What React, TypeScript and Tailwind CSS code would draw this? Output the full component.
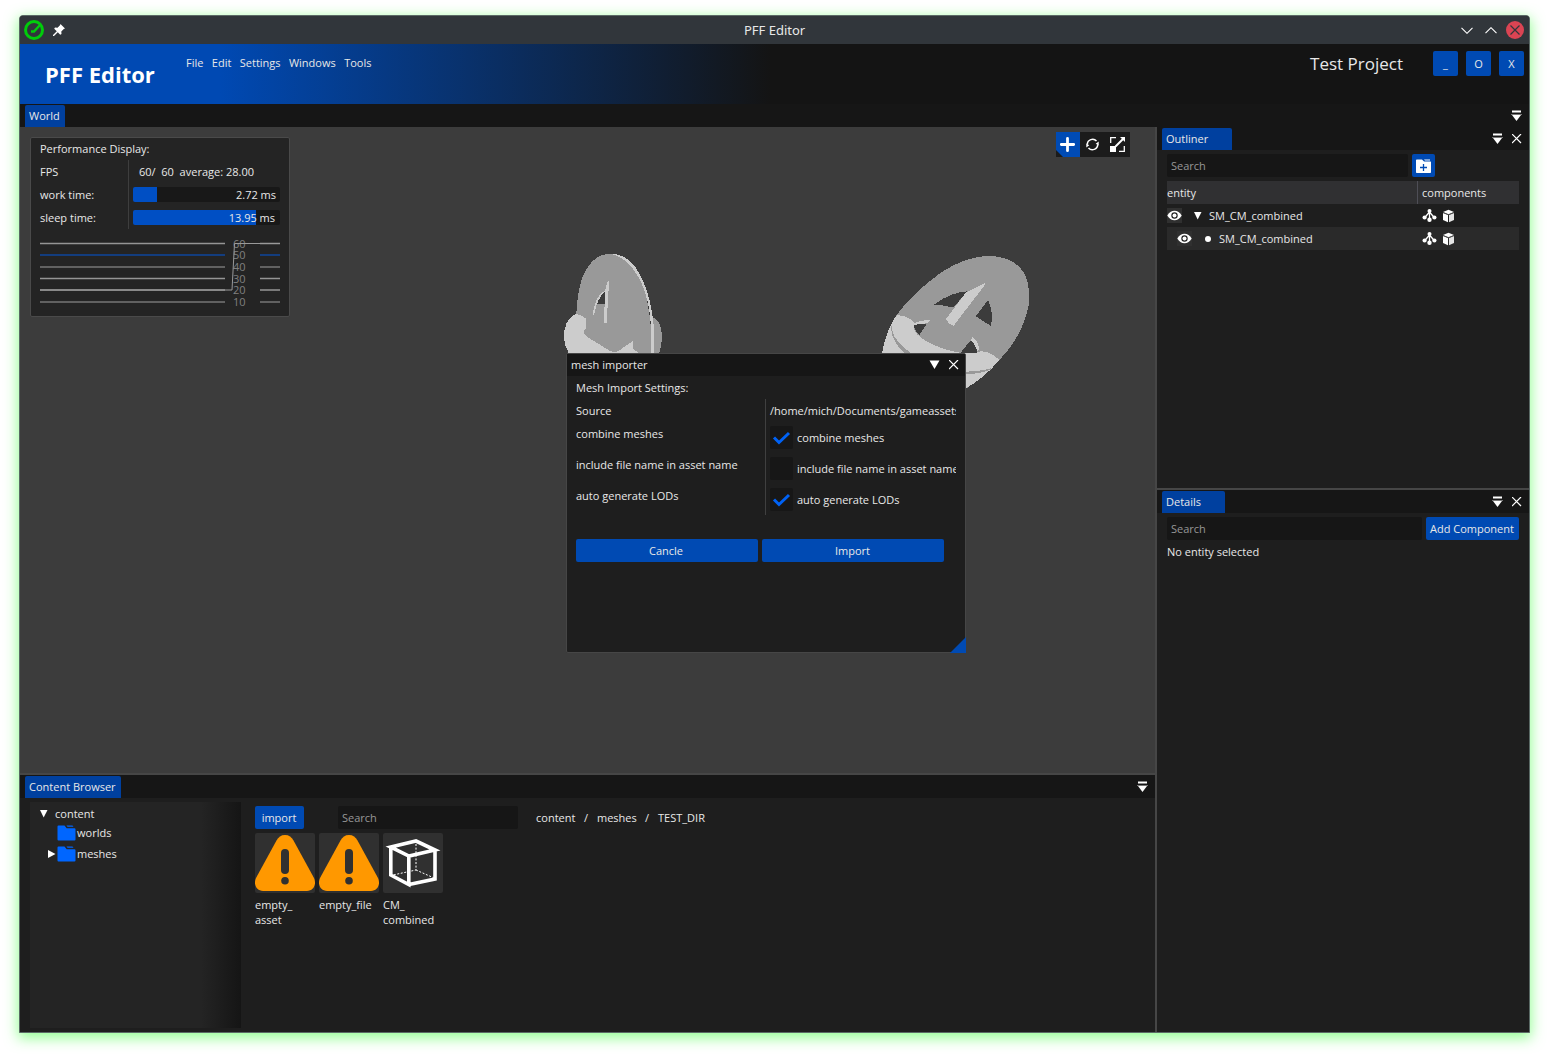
import React from "react";

type Props = { className?: string };

const CollapseIcon = ({ className = "" }: Props) => (
  <svg className={className} width="11" height="12" viewBox="0 0 11 12" fill="#fff">
    <rect x="1" y="0.5" width="9" height="2" />
    <rect x="0" y="4" width="11" height="1" fill="#777" />
    <path d="M1 5h9L5.500 11z" />
  </svg>
);

const CloseIcon = () => (
  <svg width="10" height="10" viewBox="0 0 10 10" stroke="#fff" strokeWidth="1.2" fill="none">
    <path d="M0 0l9 9M9 0l-9 9" />
  </svg>
);

const DownTriangle = ({ className = "" }: Props) => (
  <svg className={className} width="8" height="8" viewBox="0 0 8 8" fill="#fff">
    <path d="M0 0h7.500L3.700 7.500z" />
  </svg>
);

const EyeIcon = () => (
  <svg className="block bg-[#303030]" width="15" height="15" viewBox="0 0 15 15">
    <path d="M0.3 7.5C2 4.400 4.500 2.800 7.500 2.800S13 4.400 14.700 7.500C13 10.600 10.500 12.200 7.500 12.200S2 10.600.3 7.500z" fill="#fff" />
    <circle cx="7.500" cy="7.500" r="3.200" fill="#222" />
    <circle cx="7.500" cy="7.500" r="2" fill="#fff" />
  </svg>
);

const NodesIcon = () => (
  <svg width="15" height="15" viewBox="0 0 15 15" fill="#fff" stroke="#fff">
    <circle cx="7.500" cy="3" r="2" stroke="none" />
    <circle cx="2.600" cy="9.500" r="2.100" stroke="none" />
    <circle cx="12.400" cy="9.500" r="2.100" stroke="none" />
    <circle cx="7.500" cy="11.800" r="2.200" stroke="none" />
    <path d="M7.500 3.500v8M7.500 4L2.800 9.500M7.500 4l4.700 5.500" strokeWidth="1.300" fill="none" />
  </svg>
);

const BoxIcon = () => (
  <svg width="13" height="14" viewBox="0 0 13 14" fill="#fff">
    <path d="M6.500 .8L12 3 6.500 5.200 1 3z" />
    <path d="M1 4l5 2.100v7.100L1 11z" />
    <path d="M12 4L7 6.100v7.100L12 11z" fill="#e4e4e4" />
    <path d="M1 3.500l5.500 2.300L12 3.500" stroke="#555" strokeWidth=".7" fill="none" />
  </svg>
);

const FolderIcon = () => (
  <svg width="19" height="16" viewBox="0 0 19 16" fill="#0066ff">
    <path d="M1.500 .5h6l2.200 2.700h7.800a1 1 0 011 1v10.300a1 1 0 01-1 1h-16a1 1 0 01-1-1v-13a1 1 0 011-1z" />
    <path d="M9.500 .6h6l1 1.200h-6z" />
  </svg>
);

const CheckBox = ({ on }: { on: boolean }) => (
  <span className="h-[23px] w-[23px] shrink-0 rounded-[2px] bg-[#171717]">
    {on && (
      <svg width="23" height="23" viewBox="0 0 23 23" fill="none" stroke="#0062f5" strokeWidth="3">
        <path d="M4 11.500l5 5L19 7" />
      </svg>
    )}
  </span>
);

const Tab = ({ label, className }: { label: string; className: string }) => (
  <div className={`h-[22px] rounded-t-[2px] bg-[#00409f] pl-1 leading-[22px] ${className}`}>{label}</div>
);

const Meshes = () => (
  <svg className="absolute left-0 top-0" width="1135" height="646" viewBox="20 127 1135 646" shapeRendering="crispEdges">
    <g transform="translate(555 245) scale(.33333)">
      <path fill="#999" d="M290 216Q308 222 316 242Q327 282 312 326H280z" />
      <path fill="#999" d="M64 326V208Q66 145 82 98Q112 26 165 27Q218 30 260 110Q288 180 292 326z" />
      <path fill="#ccc" d="M165 27Q208 24 240 65Q285 130 296 240L297 326H288V250Q286 175 260 115Q228 48 180 30z" />
      <path fill="#ccc" d="M64 207Q74 208 92 220V250L88 256V266L92 270L94 274L165 318L180 322L190 318L233 289L234 310L252 326H42Q16 282 34 236Q44 214 64 207z" />
      <path fill="#3c3c3c" d="M150 137V176H126Q134 148 150 137z" />
      <path fill="#ccc" d="M157 110Q162 106 162 114L155 234H147L150 140zM150 138Q122 150 114 204L115 211L119 204Q125 164 150 138z" />
    </g>
    <g transform="translate(870 245) scale(.33333)">
      <path fill="#999" d="M36 326Q46 268 78 212Q128 144 210 85Q285 35 355 33Q430 33 462 84Q482 120 476 180Q460 270 388 345Q340 396 285 433z" />
      <path fill="#ccc" d="M36 326Q46 262 78 212Q98 209 116 219Q134 230 138 239Q129 246 134 258Q160 298 260 322L276 323H315Q350 309 388 345Q345 398 284 432z" />
      <path fill="#999" d="M64 240Q60 285 104 324H123Q74 290 67 258zM286 380Q330 379 363 370V374Q330 387 286 388z" />
      <path fill="#3c3c3c" d="M192 179Q240 142 292 139L250 188Q220 180 192 179zM354 165L317 214L363 243Q372 205 354 165zM136 239L171 236L149 269Q134 258 132 243zM302 286L272 323H320V310Q312 294 302 286z" />
      <path fill="#ccc" d="M288 142L346 113V118L251 242L237 236L228 222zM135 233Q155 225 181 225L171 235L136 239zM308 276Q325 288 328 314L321 319Q318 300 302 286z" />
    </g>
  </svg>
);

const PerfLine = ({ y, color }: { y: number; color: string }) => (
  <path d={`M0 ${y}h185M220 ${y}h20`} stroke={color} strokeWidth="1.300" />
);

const Performance = () => (
  <div className="absolute left-[10px] top-[10px] h-[180px] w-[260px] rounded-[2px] border border-[#4a4a4a] bg-[#242424] px-[9px]">
    <div className="h-[22px] leading-[22px]">Performance Display:</div>
    <div className="flex h-[69px]">
      <div className="w-[89px] border-r border-[#3e3e3e] leading-[23px]">
        <div>FPS</div>
        <div>work time:</div>
        <div>sleep time:</div>
      </div>
      <div className="flex-1 pl-1 leading-[23px]">
        <div className="whitespace-pre pl-[6px]">60/  60  average: 28.00</div>
        <div className="mt-1 h-[15px] rounded-[2px] bg-[#181818] pr-1 text-right leading-[15px]" style={{ backgroundImage: "linear-gradient(90deg,#004fc4 24px,transparent 24px)" }}>2.72 ms</div>
        <div className="mt-2 h-[15px] rounded-[2px] bg-[#181818] pr-[5px] text-right leading-[15px]" style={{ backgroundImage: "linear-gradient(90deg,#004fc4 123px,transparent 123px)" }}>13.95 ms</div>
      </div>
    </div>
    <svg className="mt-[6px] block overflow-visible" width="240" height="75" fill="none">
      <g fill="#808080" fontSize="11">
        {[12.500, 24, 36, 48, 59, 71].map((y, i) => (
          <text key={y} x="193" y={y}>{60 - i * 10}</text>
        ))}
      </g>
      {[8.500, 20, 32, 43.500, 55, 67].map((y, i) => (
        <PerfLine key={y} y={y} color={i === 1 ? "#0e459c" : i === 4 || i === 0 || i === 3 ? "#959595" : "#757575"} />
      ))}
      <path d="M0 55H192L194.500 8.500H240" stroke="#999" strokeWidth="1" />
    </svg>
  </div>
);

const GizmoBar = () => (
  <div className="absolute left-[1036px] top-[5px] flex bg-[#1b1b1b]">
    <svg width="24" height="25" viewBox="0 0 24 25">
      <path d="M0 0h24v25H7L0 18z" fill="#004bb5" />
      <path d="M11.500 6.300v12.400M5.300 12.500h12.400" stroke="#fff" strokeWidth="2.800" strokeLinecap="round" />
    </svg>
    <svg width="25" height="25" viewBox="0 0 25 25" fill="none" stroke="#fff" strokeWidth="1.500">
      <path d="M7.300 12.500A5.300 5.300 0 0116.500 9M17.700 12.500A5.300 5.300 0 018.500 16" />
      <path d="M18.700 9.500v4l-3-1.800zM6.300 15.500v-4l3 1.800z" fill="#fff" stroke="none" />
    </svg>
    <svg width="25" height="25" viewBox="0 0 25 25" fill="none" stroke="#fff">
      <path d="M5.700 11V5.700H11M19.300 14v5.300H14" strokeWidth="1.300" />
      <rect x="5" y="14" width="6" height="6" fill="#fff" stroke="none" />
      <path d="M10.500 14.500L18 7" strokeWidth="2" />
      <path d="M15 5h5v5z" fill="#fff" stroke="none" />
    </svg>
  </div>
);

const settings = [
  { name: "combine meshes", on: true },
  { name: "include file name in asset name", on: false },
  { name: "auto generate LODs", on: true },
];

const Importer = () => (
  <div className="absolute left-[546px] top-[226px] h-[300px] w-[400px] rounded-[2px] border border-[#464646] bg-[#1e1e1e]">
    <div className="flex h-[22px] items-center bg-[#161616] pl-1 pr-[6px]">
      <span className="flex-1 leading-[22px]">mesh importer</span>
      <svg className="mr-[9px]" width="11" height="10" viewBox="0 0 11 10"><path d="M.5 .5h10L5.500 9z" fill="#fff" /></svg>
      <CloseIcon />
    </div>
    <div className="px-[9px]">
      <div className="h-[23px] leading-[23px]">Mesh Import Settings:</div>
      <div className="flex h-[116px]">
        <div className="w-[190px] border-r border-[#404040] leading-[23px]">
          <div>Source</div>
          {settings.map((s) => <div key={s.name} className="mb-2 h-[23px]">{s.name}</div>)}
        </div>
        <div className="w-[190px] overflow-hidden whitespace-nowrap pl-1 leading-[23px]">
          <div className="mb-[4px]">/home/mich/Documents/gameassets</div>
          {settings.map((s) => (
            <div key={s.name} className="mb-2 flex h-[23px] gap-1"><CheckBox on={s.on} /><span>{s.name}</span></div>
          ))}
        </div>
      </div>
      <div className="mt-[24px] flex gap-1 text-center leading-[23px]">
        <div className="h-[23px] w-[182px] rounded-[2px] bg-[#004ab3] pr-[2px]">Cancle</div>
        <div className="h-[23px] w-[182px] rounded-[2px] bg-[#004ab3] pr-[1px]">Import</div>
      </div>
    </div>
    <svg className="absolute -bottom-px -right-px" width="16" height="16"><path d="M16 0v16H0z" fill="#004ab3" /></svg>
  </div>
);

const WarningIcon = () => (
  <svg width="60" height="60" viewBox="0 0 60 60">
    <path d="M30 2C34 2 36.500 4 38.500 7.500L59 45C62 52 58 58 52 58H8C2 58-2 52 1 45L21.500 7.500C23.500 4 26 2 30 2z" fill="#ff9800" />
    <rect x="26" y="16" width="8" height="25" rx="4" fill="#303030" />
    <circle cx="30" cy="47.700" r="3.800" fill="#303030" />
  </svg>
);

const CubeIcon = () => (
  <svg width="60" height="60" viewBox="0 0 60 60" fill="none" stroke="#fff">
    <path d="M7.800 14L33 8l19 9-26 6zM7.800 14v28l18 9.500V23M26 51.500L52 46V17" strokeWidth="3.600" />
    <path d="M33 11v26L10 42M33 37l18 8" strokeWidth="1" strokeDasharray="2 1.600" />
  </svg>
);

const assets = [
  { lines: ["empty_", "asset"], Icon: WarningIcon },
  { lines: ["empty_file"], Icon: WarningIcon },
  { lines: ["CM_", "combined"], Icon: CubeIcon },
];

const ContentBrowser = () => (
  <div className="flex h-[257px] flex-col bg-[#1e1e1e]">
    <div className="flex h-[23px] items-end justify-between bg-[#161616] pl-[5px] pr-[7px]">
      <Tab label="Content Browser" className="w-[96px]" />
      <CollapseIcon className="mb-[5px]" />
    </div>
    <div className="flex flex-1 pl-[10px] pt-1">
      <div className="h-[226px] w-[211px] bg-[linear-gradient(90deg,#242424_81%,#151515_100%)] pt-[4px]">
        <div className="flex h-[16px] items-center"><DownTriangle className="ml-[10px] mr-[7px]" />content</div>
        <div className="mt-[3px] flex h-[16px] items-center gap-px pl-[27px]"><FolderIcon />worlds</div>
        <div className="mt-[5px] flex h-[16px] items-center gap-px pl-[18px]">
          <svg width="8" height="8" viewBox="0 0 8 8"><path d="M0 0v8L7.500 4z" fill="#fff" /></svg>
          <FolderIcon />meshes
        </div>
      </div>
      <div className="pl-[14px] pt-1">
        <div className="flex h-[23px] leading-[23px]">
          <div className="w-[49px] rounded-[2px] bg-[#004ab3] pr-px text-center">import</div>
          <div className="ml-[34px] w-[180px] rounded-[2px] bg-[#161616] pl-1 text-[#969696]">Search</div>
          <div className="ml-[18px] flex"><span className="w-[48px]">content</span><span className="w-[13px]">/</span><span className="w-[48px]">meshes</span><span className="w-[13px]">/</span><span>TEST_DIR</span></div>
        </div>
        <div className="mt-1 flex gap-1">
          {assets.map(({ lines, Icon }) => (
            <div key={lines[0]} className="w-[60px]">
              <div className="h-[60px] rounded-[2px] bg-[#303030]"><Icon /></div>
              <div className="mt-[4px] leading-[15px]">{lines.map((l) => <div key={l}>{l}</div>)}</div>
            </div>
          ))}
        </div>
      </div>
    </div>
  </div>
);

const PanelBar = ({ label, tab }: { label: string; tab: string }) => (
  <div className="flex h-[23px] items-center bg-[#161616] pl-[5px] pr-[7px]">
    <Tab label={label} className={tab} />
    <span className="flex-1" />
    <CollapseIcon className="mr-[9px]" />
    <CloseIcon />
  </div>
);

const Entity = ({ child }: { child?: boolean }) => (
  <div className={`flex h-[23px] items-center ${child ? "bg-[#2a2a2a] pl-[10px]" : ""}`}>
    <EyeIcon />
    {child ? <span className="ml-[13px] mr-[8px] h-[6px] w-[6px] rounded-full bg-white" /> : <DownTriangle className="ml-[12px] mr-[7px]" />}
    <span className="flex-1 leading-[23px]">SM_CM_combined</span>
    <div className="flex w-[97px] items-center gap-[5px]"><NodesIcon /><BoxIcon /></div>
  </div>
);

const Sidebar = () => (
  <div className="flex w-[372px] flex-col bg-[#1e1e1e]">
    <div className="h-[361px]">
      <PanelBar label="Outliner" tab="w-[70px]" />
      <div className="pl-[10px] pr-[10px] pt-1">
        <div className="flex h-[23px] gap-1 leading-[23px]">
          <div className="w-[241px] rounded-[2px] bg-[#161616] pl-1 text-[#969696]">Search</div>
          <div className="flex w-[23px] items-center justify-center rounded-[2px] bg-[#004ab3]">
            <svg width="15" height="14" viewBox="0 0 15 14">
              <path d="M0 1.500C0 .8.500.5 1 .5h5l2 2h6.500c.3 0 .5.300.5.800V13c0 .6-.4 1-1 1H1c-.6 0-1-.4-1-1z" fill="#fff" />
              <path d="M8 .5h6v1H9z" fill="#fff" />
              <path d="M7.500 5v7M4 8.500h7" stroke="#004ab3" strokeWidth="1.300" />
            </svg>
          </div>
        </div>
        <div className="mt-1 flex h-[23px] bg-[#303032] leading-[23px]"><div className="w-[251px] border-r border-[#4e4e56]">entity</div><div className="pl-1">components</div></div>
        <Entity />
        <Entity child />
      </div>
    </div>
    <div className="h-[2px] bg-[#464646]" />
    <PanelBar label="Details" tab="w-[63px]" />
    <div className="px-[10px] pt-1 leading-[23px]">
      <div className="flex h-[23px] gap-1">
        <div className="w-[255px] rounded-[2px] bg-[#161616] pl-1 text-[#969696]">Search</div>
        <div className="w-[93px] rounded-[2px] bg-[#004ab3] pr-px text-center">Add Component</div>
      </div>
      <div>No entity selected</div>
    </div>
  </div>
);

export default function App() {
  return (
    <div className="h-[1056px] w-[1549px] overflow-hidden bg-white pl-[19px] pt-[15px] font-['Open_Sans',sans-serif] text-[11px] text-[#e8e8e8]">
      <div className="h-[1018px] w-[1511px] overflow-hidden rounded-t-[4px] border border-[#5b6a66] bg-[#161616] shadow-[0_4px_14px_1px_rgba(60,255,60,0.550)]">
        <div className="flex h-[28px] items-center bg-[#31363b] pl-[4px] pr-[5px] font-['Noto_Sans',sans-serif]">
          <svg width="20" height="20" viewBox="0 0 20 20" fill="none" stroke="#00cc0a">
            <circle cx="10" cy="10" r="8.500" strokeWidth="3" />
            <path d="M7 11.500h3l6-6.500" strokeWidth="2.400" />
          </svg>
          <svg className="ml-[9px]" width="12" height="12" viewBox="0 0 12 12" fill="#fff">
            <path d="M7.500 0L12 4.500 10.800 5 8.300 7.500 8.500 10 7.200 10.800 4.800 8.200 1 12H0v-1L3.800 7.200 1.200 4.800 2 3.500l2.500.2L7 1.200z" />
          </svg>
          <span className="ml-[51px] flex-1 pl-[628px] pt-[2px] text-[13px]">PFF Editor</span>
          <svg width="12" height="7" viewBox="0 0 12 7" fill="none" stroke="#fff" strokeWidth="1.100"><path d="M.5.8L6 6.300 11.500.8" /></svg>
          <svg className="ml-[12px]" width="12" height="7" viewBox="0 0 12 7" fill="none" stroke="#fff" strokeWidth="1.100"><path d="M.5 6.200L6 .7l5.500 5.500" /></svg>
          <svg className="ml-[9px]" width="18" height="18" viewBox="0 0 18 18"><circle cx="9" cy="9" r="9" fill="#da4453" /><path d="M4.500 4.500l9 9M13.500 4.500l-9 9" stroke="#31363b" strokeWidth="1.200" /></svg>
        </div>
        <div className="flex h-[60px] bg-[linear-gradient(90deg,#0049b3_200px,#141414_750px)] pr-[5px]">
          <div className="w-[166px] pl-[25px] pt-[15px] text-[22px] font-bold leading-[30px] text-white">PFF Editor</div>
          <div className="flex flex-1 gap-[8.400px] pt-[7px] leading-[24px]"><span>File</span><span>Edit</span><span>Settings</span><span>Windows</span><span>Tools</span></div>
          <div className="pr-[30px] pt-[7px] text-[17px] leading-[25px]">Test Project</div>
          <div className="flex gap-[8px] pt-[7px] text-center leading-[25px]">
            {["_", "O", "X"].map((c) => <div key={c} className="h-[25px] w-[25px] rounded-[2px] bg-[#004ab3]">{c}</div>)}
          </div>
        </div>
        <div className="flex h-[23px] items-end justify-between pl-[5px] pr-[7px]"><Tab label="World" className="w-[40px]" /><CollapseIcon className="mb-[5px]" /></div>
        <div className="flex h-[905px]">
          <div className="w-[1135px]">
            <div className="relative h-[646px] bg-[#3c3c3c]">
              <Meshes />
              <Performance />
              <GizmoBar />
              <Importer />
            </div>
            <div className="h-[2px] bg-[#464646]" />
            <ContentBrowser />
          </div>
          <div className="w-[2px] bg-[#464646]" />
          <Sidebar />
        </div>
      </div>
    </div>
  );
}
